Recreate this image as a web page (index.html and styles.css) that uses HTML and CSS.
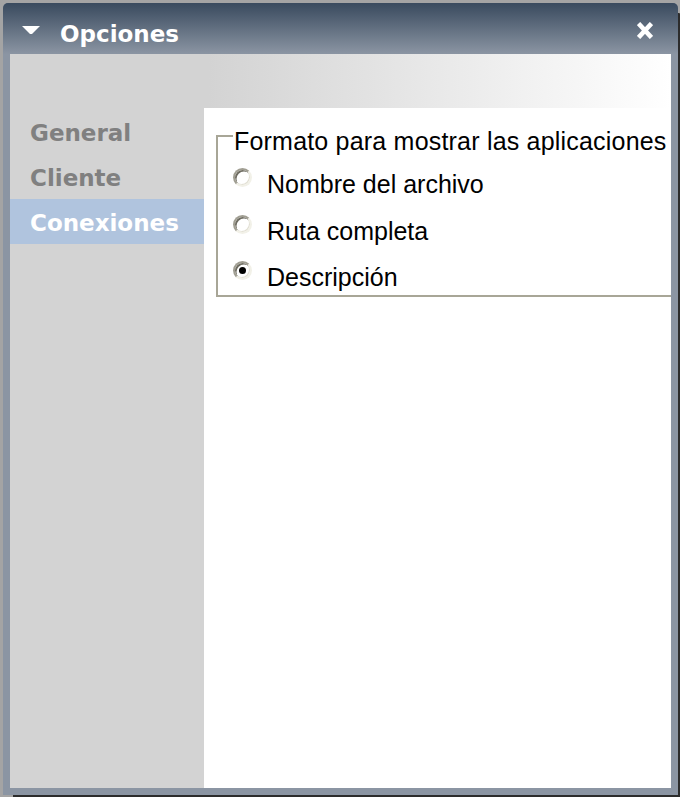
FILE: index.html
```html
<!DOCTYPE html>
<html lang="es">
<head>
<meta charset="utf-8">
<title>Opciones</title>
<link rel="stylesheet" href="styles.css">
</head>
<body>
<div class="window">
  <div class="titlebar">
    <svg class="collapse" width="18" height="9" viewBox="0 0 18 9"><polygon points="0,0 18,0 10,8 8,8" fill="#fff"/></svg>
    <span class="title">Opciones</span>
    <svg class="close" width="16" height="17" viewBox="0 0 16 17"><path d="M1.5 1.5 L14.5 15.5 M14.5 1.5 L1.5 15.5" stroke="#fff" stroke-width="4.6" fill="none"/></svg>
  </div>
  <div class="frame">
    <div class="banner"></div>
    <div class="main">
      <nav class="sidebar">
        <div class="nav-item">General</div>
        <div class="nav-item">Cliente</div>
        <div class="nav-item active">Conexiones</div>
      </nav>
      <div class="content">
        <fieldset class="group">
          <legend>Formato para mostrar las aplicaciones</legend>
          <label class="option"><span class="radio"></span>Nombre del archivo</label>
          <label class="option"><span class="radio"></span>Ruta completa</label>
          <label class="option"><span class="radio checked"></span>Descripción</label>
        </fieldset>
      </div>
    </div>
  </div>
</div>
</body>
</html>
```
FILE: styles.css
```css
html, body {
  margin: 0;
  height: 100%;
}
body {
  background: #a4a4a4;
  overflow: hidden;
}
.window {
  margin: 3px 0 0 3px;
  width: 675px;
  height: 792px;
  background: #8b95a3;
  border-radius: 5px 5px 0 0;
  box-shadow: 6px 6px 0 -4px #2c2c2c;
  display: flex;
  flex-direction: column;
}
.titlebar {
  flex: none;
  height: 51px;
  box-sizing: border-box;
  padding-left: 19px;
  display: flex;
  align-items: center;
  background: linear-gradient(#394a5e, #8b95a3);
  border-radius: 5px 5px 0 0;
}
.collapse {
  flex: none;
  margin: 4px 20px 0 0;
}
.title {
  flex: 1;
  padding-top: 10px;
  font: bold 23px "DejaVu Sans", sans-serif;
  color: #fff;
}
.close {
  flex: none;
  margin: 4px 25px 0 0;
}
.frame {
  flex: 1;
  min-height: 0;
  margin: 0 7px 7px;
  display: flex;
  flex-direction: column;
}
.banner {
  flex: none;
  height: 54px;
  background: linear-gradient(to right, #d3d3d3 30%, #ffffff 100%);
}
.main {
  flex: 1;
  min-height: 0;
  display: flex;
}
.sidebar {
  flex: none;
  width: 194px;
  padding-top: 1px;
  background: #d3d3d3;
}
.nav-item {
  height: 45px;
  box-sizing: border-box;
  padding: 11px 0 0 20px;
  font: bold 23px/27px "DejaVu Sans", sans-serif;
  color: #808080;
}
.nav-item.active {
  background: #b0c4de;
  color: #fff;
}
.content {
  flex: 1;
  background: #fff;
  overflow: hidden;
}
.group {
  margin: 9px 0 0 12px;
  width: 470px;
  box-sizing: border-box;
  border: 2px solid #a8a697;
  padding: 11px 0 0 15px;
  display: flex;
  flex-direction: column;
  gap: 10.65px;
}
.group legend {
  padding: 10px 8px 0 1px;
  font-family: "Liberation Sans", Arial, sans-serif;
  font-size: 25px;
  line-height: 28px;
  letter-spacing: 0.2px;
  color: #000;
}
.option {
  display: flex;
  align-items: flex-start;
  height: 36px;
  font-family: "Liberation Sans", Arial, sans-serif;
  font-size: 25px;
  line-height: 36px;
  color: #000;
}
.radio {
  flex: none;
  width: 19px;
  height: 19px;
  box-sizing: border-box;
  margin: 2px 15px 0 0;
  border-radius: 50%;
  border: 2px solid;
  border-color: #a09e92 #f2f1e8 #f2f1e8 #a09e92;
  box-shadow: inset 1.5px 1.5px 0 #6f6d62, inset -1px -1px 0 #e2e0d4;
  background: #fff;
  display: flex;
  align-items: center;
  justify-content: center;
}
.radio.checked::after {
  content: "";
  width: 7px;
  height: 7px;
  border-radius: 50%;
  background: #000;
}
```
